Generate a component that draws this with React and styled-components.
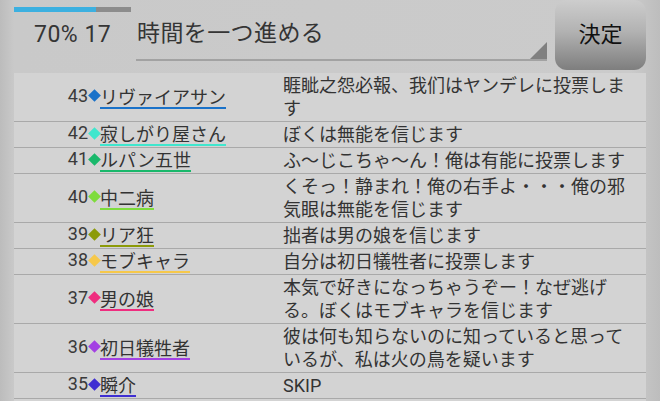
import React from 'react'
import styled, { createGlobalStyle } from 'styled-components'

const GlobalStyle = createGlobalStyle`
  html, body {
    margin: 0;
    padding: 0;
    width: 660px;
    height: 401px;
    overflow: hidden;
  }
  body {
    background: linear-gradient(to right, #bcbcbc 0px, #c9c9c9 14px, #cbcbcb 630px, #bdbdbd 660px);
    font-family: Roboto, "Noto Sans CJK JP", sans-serif;
    color: #383838;
  }
`

const Screen = styled.div`
  display: flex;
  flex-direction: column;
  width: 660px;
  height: 401px;
`

const Header = styled.div`
  display: flex;
  height: 73px;
  flex-shrink: 0;
  padding-right: 14px;
`

const Status = styled.div`
  width: 122px;
  padding: 7px 0 0 14px;
`

const Progress = styled.div`
  width: 117px;
  height: 5px;
  background: #8c8c8c;
`

const ProgressFill = styled.div`
  height: 100%;
  background: #3cb0e0;
`

const StatusLabel = styled.div`
  margin-top: 10px;
  padding-left: 20px;
  font-size: 23px;
  letter-spacing: 0.5px;
  line-height: 26px;
  color: #353535;
  white-space: nowrap;
`

const Spinner = styled.div`
  position: relative;
  flex: 1;
  height: 61px;
  border-bottom: 2px solid #a2a2a2;
  padding: 16px 0 0 1px;
  box-sizing: border-box;
  font-family: "Noto Sans CJK JP", sans-serif;
  font-size: 23px;
  letter-spacing: 0.4px;
  line-height: 30px;
  color: #353535;
`

const SpinnerArrow = styled.svg`
  position: absolute;
  right: 0;
  bottom: 0;
`

const DecideButton = styled.button`
  margin-left: 8px;
  width: 91px;
  height: 70px;
  border: none;
  border-radius: 12px;
  background: linear-gradient(to bottom, #cdcdcd 0%, #b2b2b2 45%, #7e7e7e 100%);
  font-family: "Noto Sans CJK JP", sans-serif;
  font-size: 22px;
  color: #111;
  padding: 0 0 6px;
`

const Table = styled.div`
  margin: 0 14px;
  background: #d3d3d3;
  flex: 1;
`

const Row = styled.div`
  display: grid;
  grid-template-columns: 269px 350px;
  align-items: center;
  border-bottom: 1px solid #a9a9a9;
  padding: 1px 0;
  font-size: 18px;
  line-height: 23px;
`

const Player = styled.div`
  display: flex;
  align-items: flex-start;
  height: 23px;
`

const Num = styled.span`
  width: 74px;
  text-align: right;
  line-height: 20px;
  color: #3a3a3a;
`

const DiamondCell = styled.span`
  display: flex;
  align-items: center;
  justify-content: center;
  width: 12px;
  height: 20px;
`

const Diamond = styled.span`
  width: 9px;
  height: 9px;
  background: ${p => p.$color};
  transform: rotate(45deg);
`

const Name = styled.span`
  font-family: "Noto Sans CJK JP", sans-serif;
  line-height: 20px;
  padding-bottom: 1px;
  border-bottom: 2px solid ${p => p.$color};
  color: #333;
`

const Message = styled.div`
  color: #333;
  line-break: strict;
`

const players = [
  { no: 43, name: 'リヴァイアサン', color: '#1a72c9', text: '睚眦之怨必報、我们はヤンデレに投票します' },
  { no: 42, name: '寂しがり屋さん', color: '#3fe6cd', text: 'ぼくは無能を信じます' },
  { no: 41, name: 'ルパン五世', color: '#19b86b', text: 'ふ〜じこちゃ〜ん！俺は有能に投票します' },
  { no: 40, name: '中二病', color: '#7edc3c', text: 'くそっ！静まれ！俺の右手よ・・・俺の邪気眼は無能を信じます' },
  { no: 39, name: 'リア狂', color: '#8c9a08', text: '拙者は男の娘を信じます' },
  { no: 38, name: 'モブキャラ', color: '#f6c84a', text: '自分は初日犠牲者に投票します' },
  { no: 37, name: '男の娘', color: '#ef2d7f', text: '本気で好きになっちゃうぞー！なぜ逃げる。ぼくはモブキャラを信じます' },
  { no: 36, name: '初日犠牲者', color: '#a341e3', text: '彼は何も知らないのに知っていると思っているが、私は火の鳥を疑います' },
  { no: 35, name: '瞬介', color: '#3f2fd2', text: 'SKIP' },
]

export default function App() {
  return (
    <Screen>
      <GlobalStyle />
      <Header>
        <Status>
          <Progress>
            <ProgressFill style={{ width: '70%' }} />
          </Progress>
          <StatusLabel>70% 17</StatusLabel>
        </Status>
        <Spinner>
          時間を一つ進める
          <SpinnerArrow width="17" height="17" viewBox="0 0 17 17">
            <polygon points="17,0 17,17 0,17" fill="#808080" />
          </SpinnerArrow>
        </Spinner>
        <DecideButton>決定</DecideButton>
      </Header>
      <Table>
        {players.map(p => (
          <Row key={p.no}>
            <Player>
              <Num>{p.no}</Num>
              <DiamondCell>
                <Diamond $color={p.color} />
              </DiamondCell>
              <Name $color={p.color}>{p.name}</Name>
            </Player>
            <Message>{p.text}</Message>
          </Row>
        ))}
      </Table>
    </Screen>
  )
}
